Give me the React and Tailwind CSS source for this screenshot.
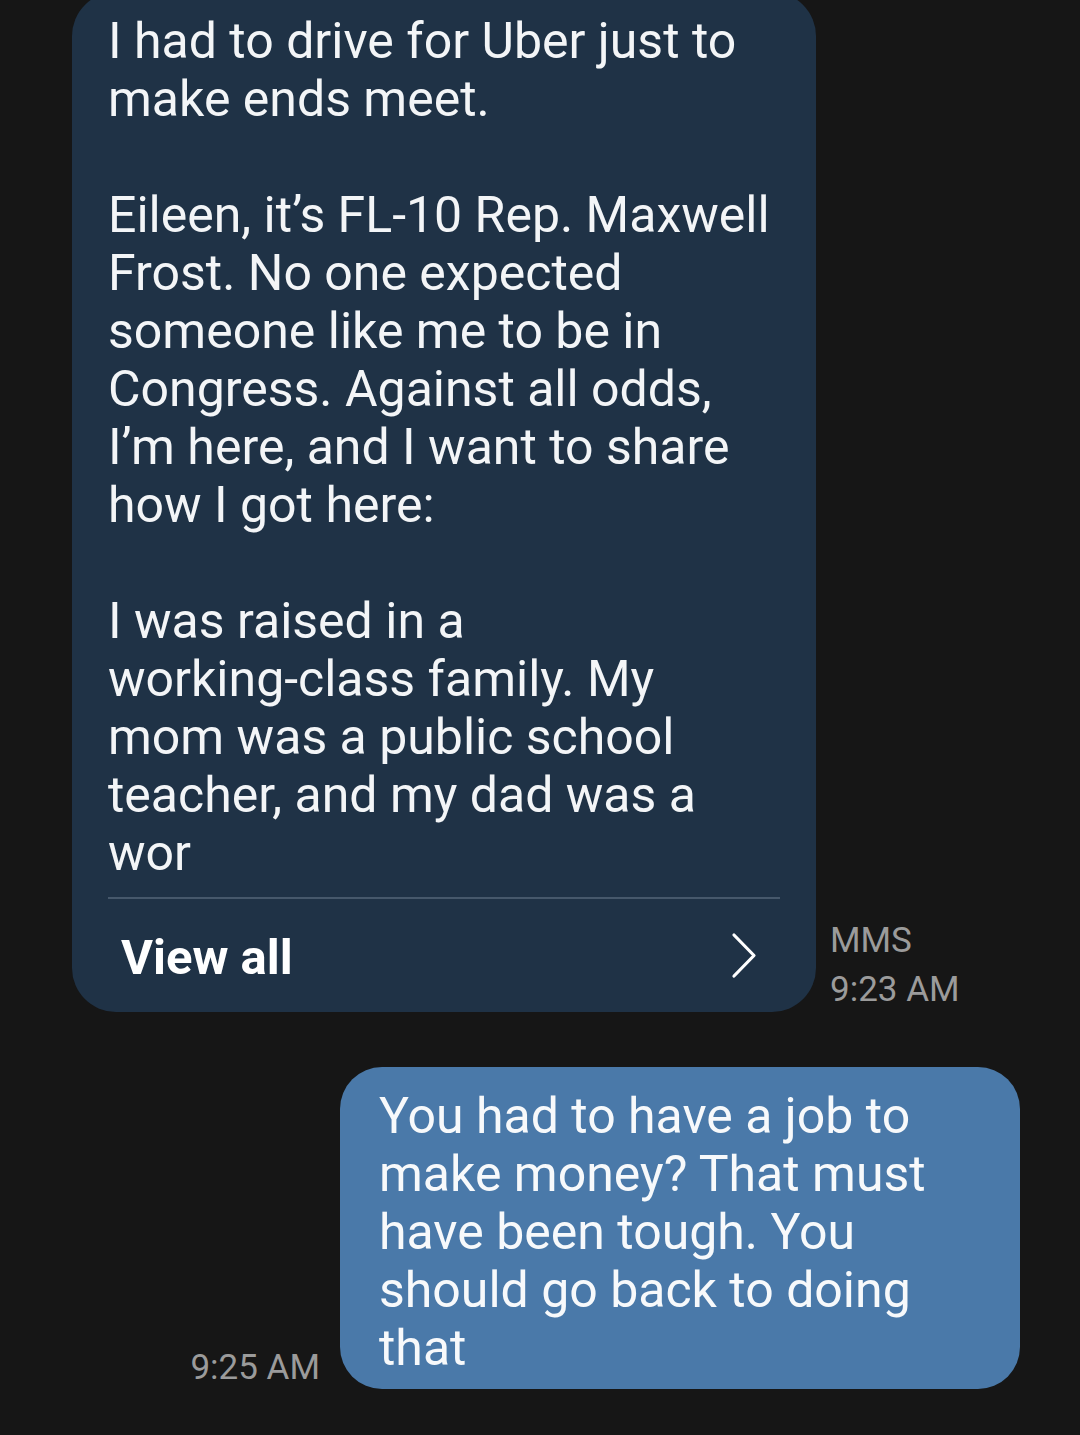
import React from 'react';

const incoming = [
  'I had to drive for Uber just to',
  'make ends meet.',
  '',
  'Eileen, it\u2019s FL-10 Rep. Maxwell',
  'Frost. No one expected',
  'someone like me to be in',
  'Congress. Against all odds,',
  'I\u2019m here, and I want to share',
  'how I got here:',
  '',
  'I was raised in a',
  'working-class family. My',
  'mom was a public school',
  'teacher, and my dad was a',
  'wor',
];

const outgoing = [
  'You had to have a job to',
  'make money? That must',
  'have been tough. You',
  'should go back to doing',
  'that',
];

function Lines({ lines }) {
  return lines.map((line, i) =>
    line ? (
      <div key={i} className="whitespace-nowrap">
        {line}
      </div>
    ) : (
      <div key={i} className="h-[58px]" />
    )
  );
}

function Chevron() {
  return (
    <svg width="26" height="47" viewBox="0 0 26 47" fill="none">
      <polyline
        points="3,3 23,23.5 3,44"
        stroke="#ffffff"
        strokeWidth="3.2"
        strokeLinecap="round"
        strokeLinejoin="round"
      />
    </svg>
  );
}

export default function App() {
  return (
    <div className="h-[1435px] overflow-hidden bg-[#161616] font-['Roboto','Noto_Sans',sans-serif] antialiased">
      {/* received MMS */}
      <div className="-mt-[8px] flex items-end pl-[72px]">
        <div className="w-[744px] rounded-[44px] bg-[#1f3246] pt-[20px]">
          <div className="px-[36px] text-[50px] leading-[58px] text-[#f3f5f7]">
            <Lines lines={incoming} />
          </div>
          <div className="mx-[36px] mt-[15px] h-[2px] bg-[#46586b]" />
          <div className="flex h-[113px] items-center justify-between pl-[49px] pr-[59px]">
            <span className="pt-[4px] text-[49px] font-bold text-white">View all</span>
            <Chevron />
          </div>
        </div>
        <div className="-mb-[2px] ml-[14px] text-[35px] leading-[49px] text-[#9b9b9b]">
          <div>MMS</div>
          <div>9:23 AM</div>
        </div>
      </div>

      {/* sent reply */}
      <div className="mt-[55px] flex items-end justify-end pr-[60px]">
        <div className="-mb-[3px] mr-[20px] text-[35px] leading-[49px] text-[#9b9b9b]">9:25 AM</div>
        <div className="w-[680px] rounded-[42px] bg-[#4a79a9] pb-[12px] pl-[39px] pt-[20px] text-[50px] leading-[58px] text-[#f7f9fb]">
          <Lines lines={outgoing} />
        </div>
      </div>
    </div>
  );
}
